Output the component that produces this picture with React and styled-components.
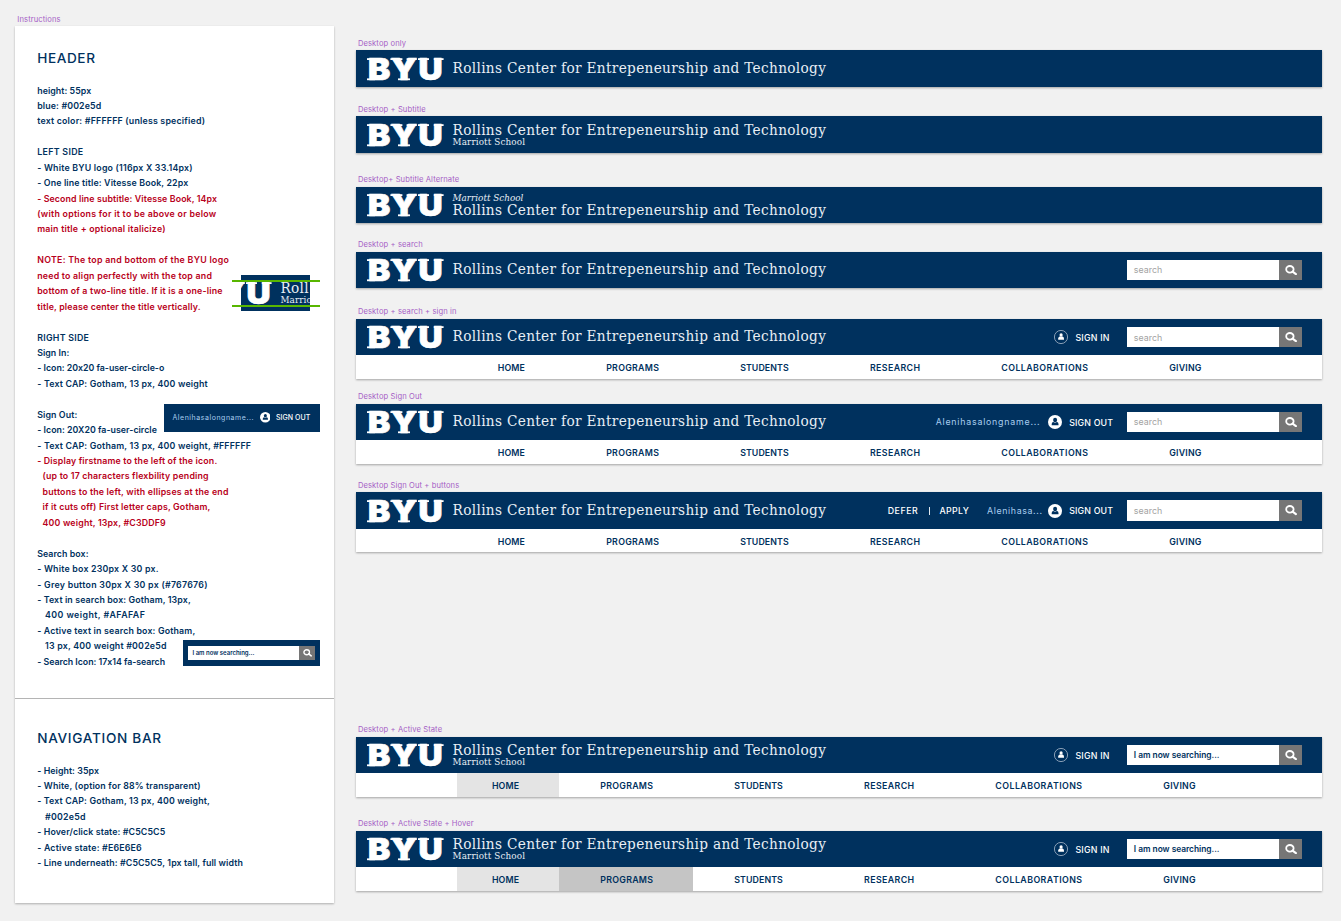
import React from 'react';
import styled, { createGlobalStyle, css } from 'styled-components';

const navy = '#00315e';
const red = '#b80020';

const GlobalStyle = createGlobalStyle`
  * { box-sizing: border-box; }
  body {
    margin: 0;
    background: #f1f1f1;
    font-family: Inter, "Liberation Sans", sans-serif;
    overflow: hidden;
  }
`;

const Page = styled.main`
  display: flex;
  gap: 21.6px;
  width: 1341px;
  height: 921px;
  padding-left: 15px;
`;

const Tracked = styled.span`
  letter-spacing: ${(p) => p.$ls || 0}px;
  margin-right: ${(p) => -(p.$ls || 0)}px;
  white-space: pre;
`;

const BoardLabel = styled.div`
  height: 12px;
  line-height: 13.4px;
  font-size: 7.6px;
  letter-spacing: 0.1px;
  color: #a65fc6;
  white-space: pre;
  padding-left: 2.3px;
`;

/* Instructions column */

const Instructions = styled.section`
  width: 319px;
  flex: none;
  padding-top: 13px;
`;

const Sheet = styled.div`
  position: relative;
  height: 877px;
  margin-top: 1px;
  background: #fff;
  box-shadow: 0 1px 2px rgba(0, 0, 0, 0.28);
`;

const SheetPart = styled.div`
  height: ${(p) => p.$height}px;
  padding: ${(p) => p.$top}px 0 0 22.2px;
  border-bottom: ${(p) => (p.$divided ? '1px solid #b4b4b4' : '0')};
`;

const Heading = styled.h2`
  margin: 0 0 ${(p) => p.$gap}px;
  font-size: 13.6px;
  line-height: 16px;
  font-weight: 550;
  color: ${navy};
`;

const Line = styled.p`
  margin: 0;
  height: 15.44px;
  line-height: 15.44px;
  font-size: 8.8px;
  font-weight: 600;
  white-space: pre;
  color: ${(p) => (p.$red ? red : navy)};
  padding-left: ${(p) => p.$indent || 0}px;
  letter-spacing: ${(p) => p.$ls}px;
`;

const Sample = styled.div`
  position: absolute;
  left: ${(p) => p.$x}px;
  top: ${(p) => p.$y}px;
  width: ${(p) => p.$w}px;
  height: ${(p) => p.$h}px;
  display: flex;
  align-items: center;
  background: ${(p) => (p.$clear ? 'transparent' : navy)};
`;

const LogoCrop = styled.div`
  width: 69px;
  height: 36px;
  margin-left: 9px;
  overflow: hidden;
  background: ${navy};
`;

const LogoShift = styled.div`
  display: flex;
  height: 36px;
  margin-left: -57.6px;
`;

const Guide = styled.i`
  position: absolute;
  left: 0;
  right: 0;
  top: ${(p) => p.$y}px;
  height: 2px;
  background: #58b600;
`;

/* Header boards */

const Boards = styled.section`
  width: 966px;
  flex: none;
`;

const Board = styled.article`
  padding-top: ${(p) => p.$gap}px;
`;

const Frame = styled.div`
  margin-top: 1.5px;
  background: #fff;
  box-shadow: 0 1px 2px rgba(0, 0, 0, 0.32);
`;

const HeaderBar = styled.header`
  display: flex;
  align-items: center;
  height: 36.6px;
  background: ${navy};
  padding-right: 20px;
`;

const BrandBox = styled.div`
  display: flex;
  align-items: center;
  gap: 9.2px;
  padding-left: 11.2px;
`;

const Titles = styled.div`
  display: flex;
  flex-direction: ${(p) => (p.$above ? 'column-reverse' : 'column')};
  gap: ${(p) => (p.$above ? 0.7 : 0)}px;
  padding-bottom: ${(p) => (p.$single ? 1.4 : 0)}px;
  color: #e9eff5;
  font-family: "DejaVu Serif Condensed", "DejaVu Serif", serif;
  font-stretch: condensed;
  white-space: nowrap;
`;

const Title = styled.div`
  font-size: 15.2px;
  line-height: 14px;
  letter-spacing: 0.33px;
`;

const Subtitle = styled.div`
  font-size: 9.8px;
  line-height: 9.6px;
  letter-spacing: 0.12px;
  ${(p) => p.$italic && css`
    font-style: italic;
    letter-spacing: 0;
  `}
`;

const Tools = styled.div`
  display: flex;
  align-items: center;
  margin-left: auto;
  font-size: 8.8px;
  font-weight: 500;
  color: #fff;
`;

const Divider = styled.span`
  width: 1px;
  height: 8px;
  margin: 0 9.6px 0 11.2px;
  background: #dfe7ef;
`;

const UserName = styled.span`
  display: flex;
  font-weight: 400;
  color: #a9cdee;
  margin: 0 ${(p) => p.$after}px 0 ${(p) => p.$before || 0}px;
`;

const SignText = styled.span`
  display: flex;
  padding-top: 0.6px;
  margin-left: 7.6px;
`;

const SearchBox = styled.div`
  display: flex;
  width: 174.6px;
  height: 20.6px;
  margin-left: ${(p) => p.$gap}px;
`;

const SearchField = styled.div`
  flex: 1;
  display: flex;
  align-items: center;
  padding: 0 0 0 6.8px;
  background: #fff;
  font-weight: ${(p) => (p.$active ? 600 : 400)};
  font-size: ${(p) => (p.$active ? 8.4 : 8.8)}px;
  color: ${(p) => (p.$active ? navy : '#a3a3a3')};
`;

const SearchButton = styled.div`
  display: flex;
  align-items: center;
  justify-content: center;
  width: 22.2px;
  padding-left: 1px;
  background: #767676;
`;

const SmallSearch = styled(SearchBox)`
  width: 126.5px;
  height: 14.4px;
  margin-left: 5px;
  ${SearchField} {
    padding-left: 4.5px;
    font-size: 6px;
  }
  ${SearchButton} {
    width: 15.8px;
  }
`;

const SmallTools = styled(Tools)`
  margin: 0 9.4px 0 auto;
  font-size: 7px;
  ${SignText} {
    padding-top: 0;
    margin-left: 5.6px;
  }
`;

const NavBar = styled.nav`
  display: flex;
  height: 23.4px;
  padding-left: ${(p) => p.$start}px;
`;

const NavItem = styled.div`
  display: flex;
  align-items: center;
  padding: 1px 39.7px 0 41.6px;
  font-size: 8.8px;
  font-weight: 600;
  color: ${navy};
  background: ${(p) => p.$fill || 'transparent'};
  &:first-child { padding-left: 35.1px; }
`;

const LogoSvg = styled.svg`
  flex: none;
  overflow: visible;
  fill: #fff;
  text {
    font-family: Inter, sans-serif;
    font-weight: 900;
    font-size: 29.8px;
    stroke: #fff;
    stroke-width: 0.7px;
  }
`;

/* Block letters with thin slab feet: [x, y, width] of each slab */
const slabs = [
  [0, 1.2, 8], [0, 21.4, 8],
  [23.4, 1.2, 12], [39.6, 1.2, 10.2], [31, 21.4, 12],
  [51, 1.2, 11], [66.8, 1.2, 9.8],
];

function Logo() {
  return (
    <LogoSvg width="76.6" height="24" viewBox="0 0 76.6 24" aria-label="BYU">
      <text x="0.8 21.5 45.9" y="22.9" transform="scale(1.12 1)">BYU</text>
      {slabs.map(([x, y, w]) => <rect key={`${x}-${y}`} x={x} y={y} width={w} height="1.8" />)}
    </LogoSvg>
  );
}

function UserIcon({ filled, size = 14 }) {
  const figure = filled ? navy : '#fff';
  return (
    <svg width={size} height={size} viewBox="0 0 14 14">
      <circle
        cx="7" cy="7" r={filled ? 7 : 6.6}
        fill={filled ? '#fff' : 'none'} stroke={filled ? 'none' : '#a9b9ca'} strokeWidth="0.8"
      />
      <ellipse cx="7.1" cy="5" rx={filled ? 2 : 1.6} ry={filled ? 2.2 : 1.8} fill={figure} />
      <path
        d={filled
          ? 'M3.7 10.3V8.9Q3.8 7.3 5.3 7.1L7.1 7.8 8.9 7.1Q10.4 7.3 10.5 8.9V10.3Z'
          : 'M4.2 9.7V8.6Q4.3 7.2 5.6 6.6H8.6Q9.9 7.2 10 8.6V9.7Z'}
        fill={figure}
      />
    </svg>
  );
}

function SearchIcon({ width = 12 }) {
  return (
    <svg width={width} height={width * 0.86} viewBox="0 0 12 10.3">
      <ellipse cx="4.9" cy="4.3" rx="3.7" ry="3.3" fill="none" stroke="#fff" strokeWidth="1.8" />
      <path d="M7.6 6.6L10.9 9.1" stroke="#fff" strokeWidth="2.1" strokeLinecap="round" />
    </svg>
  );
}

function Brand({ title = 'Rollins Center for Entrepeneurship and Technology', note = 'Marriott School', subtitle }) {
  return (
    <BrandBox>
      <Logo />
      <Titles $above={subtitle === 'above'} $single={!subtitle}>
        <Title>{title}</Title>
        {subtitle && <Subtitle $italic={subtitle === 'above'}>{note}</Subtitle>}
      </Titles>
    </BrandBox>
  );
}

function Search({ active, gap }) {
  return (
    <SearchBox $gap={gap}>
      <SearchField $active={active}>
        {active
          ? <Tracked $ls={-0.03}>I am now searching...</Tracked>
          : <Tracked $ls={0.06}>search</Tracked>}
      </SearchField>
      <SearchButton><SearchIcon /></SearchButton>
    </SearchBox>
  );
}

function SignIn() {
  return (
    <>
      <UserIcon />
      <SignText><Tracked $ls={0.22}>SIGN IN</Tracked></SignText>
    </>
  );
}

function SignOut() {
  return (
    <>
      <UserIcon filled />
      <SignText><Tracked $ls={0.16}>SIGN OUT</Tracked></SignText>
    </>
  );
}

const navItems = [
  ['HOME', 0.11], ['PROGRAMS', 0.28], ['STUDENTS', 0.09],
  ['RESEARCH', 0.387], ['COLLABORATIONS', 0.444], ['GIVING', 0.214],
];

function Nav({ start = 107.1, fills = [] }) {
  return (
    <NavBar $start={start}>
      {navItems.map(([name, ls], i) => (
        <NavItem key={name} $fill={fills[i]}><Tracked $ls={ls}>{name}</Tracked></NavItem>
      ))}
    </NavBar>
  );
}

const boards = [
  { label: 'Desktop only', gap: 36.8 },
  { label: 'Desktop + Subtitle', gap: 15.9, subtitle: 'below' },
  { label: 'Desktop+ Subtitle Alternate', gap: 20.3, subtitle: 'above' },
  { label: 'Desktop + search', gap: 14.9, tools: <Search /> },
  {
    label: 'Desktop + search + sign in', gap: 17.1, nav: <Nav />,
    tools: <><SignIn /><Search gap={17.6} /></>,
  },
  {
    label: 'Desktop Sign Out', gap: 11.3, nav: <Nav />,
    tools: (
      <>
        <UserName $after={8}><Tracked $ls={0.79}>Alenihasalongname...</Tracked></UserName>
        <SignOut /><Search gap={14} />
      </>
    ),
  },
  {
    label: 'Desktop Sign Out + buttons', gap: 15.2, nav: <Nav />,
    tools: (
      <>
        <Tracked $ls={0.54}>DEFER</Tracked>
        <Divider />
        <Tracked $ls={0.33}>APPLY</Tracked>
        <UserName $before={18} $after={5.6}><Tracked $ls={0.64}>Alenihasa...</Tracked></UserName>
        <SignOut /><Search gap={14} />
      </>
    ),
  },
  {
    label: 'Desktop + Active State', gap: 171, subtitle: 'below',
    nav: <Nav start={101.2} fills={['#e4e4e4']} />,
    tools: <><SignIn /><Search active gap={17.6} /></>,
  },
  {
    label: 'Desktop + Active State + Hover', gap: 20.4, subtitle: 'below',
    nav: <Nav start={101.2} fills={['#e4e4e4', '#c5c5c5']} />,
    tools: <><SignIn /><Search active gap={17.6} /></>,
  },
];

const headerLines = [
  ['height: 55px', 0.066], ['blue: #002e5d', 0.136],
  ['text color: #FFFFFF (unless specified)', 0.203],
  [],
  ['LEFT SIDE', 0.334], ['- White BYU logo (116px X 33.14px)', 0.205],
  ['- One line title: Vitesse Book, 22px', 0.144],
  ['- Second line subtitle: Vitesse Book, 14px', 0.112, 1],
  ['(with options for it to be above or below', 0.276, 1],
  ['main title + optional italicize)', 0.218, 1],
  [],
  ['NOTE: The top and bottom of the BYU logo', 0.286, 1],
  ['need to align perfectly with the top and', 0.224, 1],
  ['bottom of a two-line title. If it is a one-line', 0.198, 1],
  ['title, please center the title vertically.', 0.157, 1],
  [],
  ['RIGHT SIDE', 0.28], ['Sign In:', 0.036],
  ['- Icon: 20x20 fa-user-circle-o', -0.007],
  ['- Text CAP: Gotham, 13 px, 400 weight', 0.189],
  [],
  ['Sign Out:', 0.102], ['- Icon: 20X20 fa-user-circle', 0.031],
  ['- Text CAP: Gotham, 13 px, 400 weight, #FFFFFF', 0.191],
  ['- Display firstname to the left of the icon.', 0.159, 1],
  ['(up to 17 characters flexbility pending', 0.172, 1, 5.4],
  ['buttons to the left, with ellipses at the end', 0.2, 1, 5.4],
  ['if it cuts off) First letter caps, Gotham,', 0.178, 1, 5.4],
  ['400 weight, 13px, #C3DDF9', 0.173, 1, 5.4],
  [],
  ['Search box:', 0.074], ['- White box 230px X 30 px.', 0.213],
  ['- Grey button 30px X 30 px (#767676)', 0.27],
  ['- Text in search box: Gotham, 13px,', 0.121],
  ['400 weight, #AFAFAF', 0.432, 0, 7.8],
  ['- Active text in search box: Gotham,', 0.17],
  ['13 px, 400 weight #002e5d', 0.217, 0, 7.8],
  ['- Search Icon: 17x14 fa-search', -0.028],
];

const navLines = [
  ['- Height: 35px', 0.067], ['- White, (option for 88% transparent)', 0.155],
  ['- Text CAP: Gotham, 13 px, 400 weight,', 0.167], ['#002e5d', 0.255, 0, 7.8],
  ['- Hover/click state: #C5C5C5', 0.116], ['- Active state: #E6E6E6', 0.19],
  ['- Line underneath: #C5C5C5, 1px tall, full width', 0.113],
];

function Lines({ items }) {
  return items.map(([text, ls, isRed, indent], i) => (
    <Line key={i} $ls={ls || 0} $red={!!isRed} $indent={indent}>{text}</Line>
  ));
}

export default function App() {
  return (
    <Page>
      <GlobalStyle />
      <Instructions>
        <BoardLabel>Instructions</BoardLabel>
        <Sheet>
          <SheetPart $height={673} $top={24} $divided>
            <Heading $gap={16.5}><Tracked $ls={0.6}>HEADER</Tracked></Heading>
            <Lines items={headerLines} />
          </SheetPart>
          <SheetPart $height={204} $top={31}>
            <Heading $gap={16.6}><Tracked $ls={0.7}>NAVIGATION BAR</Tracked></Heading>
            <Lines items={navLines} />
          </SheetPart>
          <Sample $x={217} $y={249} $w={87.5} $h={36} $clear>
            <LogoCrop>
              <LogoShift><Brand title="Roll" note="Marrio" subtitle="below" /></LogoShift>
            </LogoCrop>
            <Guide $y={5} />
            <Guide $y={30} />
          </Sample>
          <Sample $x={149} $y={377.5} $w={155.6} $h={28.5}>
            <SmallTools>
              <UserName $after={6.2}><Tracked $ls={0.54}>Alenihasalongname...</Tracked></UserName>
              <UserIcon filled size={10.6} />
              <SignText><Tracked $ls={0.05}>SIGN OUT</Tracked></SignText>
            </SmallTools>
          </Sample>
          <Sample $x={168} $y={613.5} $w={136.6} $h={26.5}>
            <SmallSearch>
              <SearchField $active><Tracked>I am now searching...</Tracked></SearchField>
              <SearchButton><SearchIcon width={9} /></SearchButton>
            </SmallSearch>
          </Sample>
        </Sheet>
      </Instructions>
      <Boards>
        {boards.map((b) => (
          <Board key={b.label} $gap={b.gap}>
            <BoardLabel>{b.label}</BoardLabel>
            <Frame>
              <HeaderBar>
                <Brand subtitle={b.subtitle} />
                {b.tools && <Tools>{b.tools}</Tools>}
              </HeaderBar>
              {b.nav}
            </Frame>
          </Board>
        ))}
      </Boards>
    </Page>
  );
}
